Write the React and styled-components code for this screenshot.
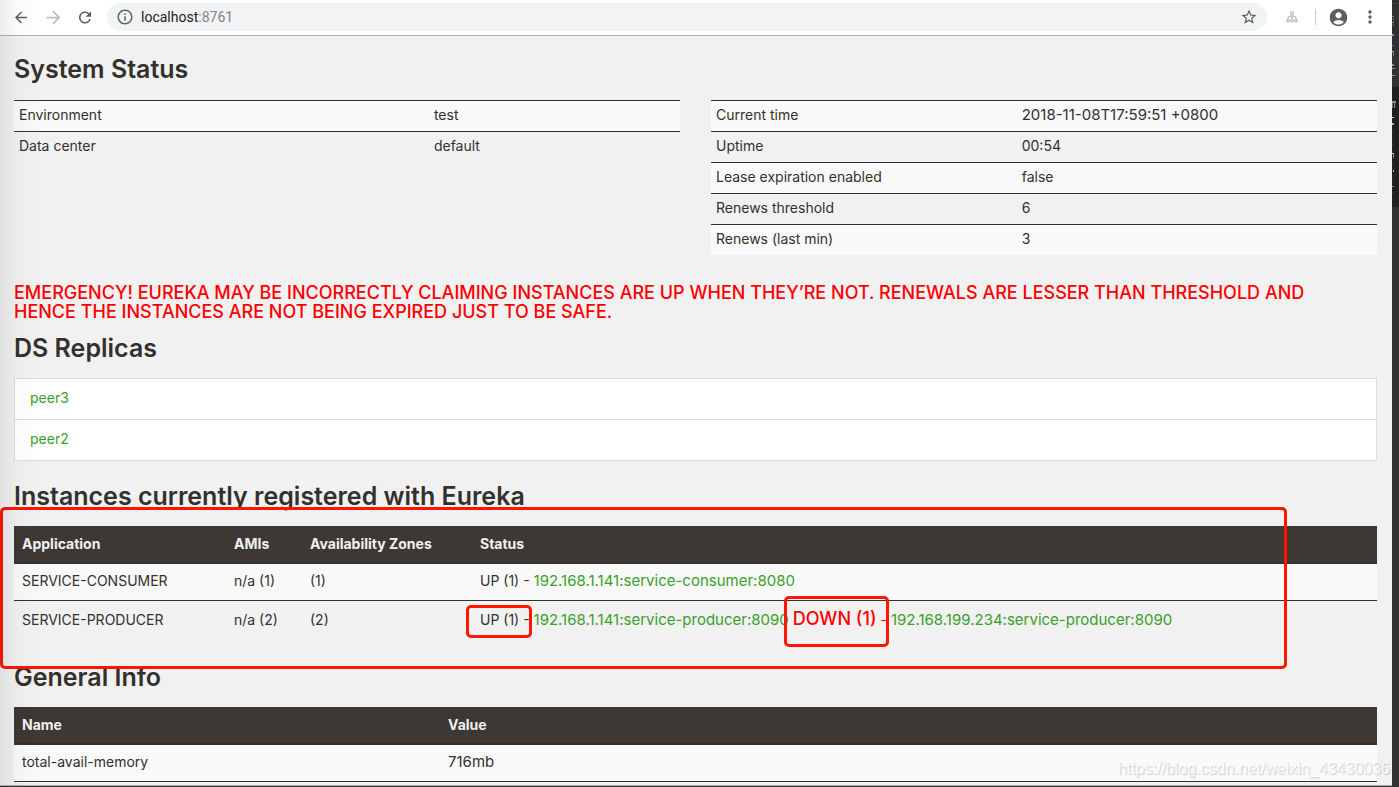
import React from "react";
import styled, { createGlobalStyle } from "styled-components";
import { MdArrowBack, MdArrowForward, MdRefresh, MdInfoOutline, MdStarBorder, MdAccountCircle, MdMoreVert } from "react-icons/md";

const GlobalStyle = createGlobalStyle`
  *, *::before, *::after { box-sizing: border-box; }
  body {
    margin: 0;
    background: #2f3133;
    color: #34302d;
    font-family: Inter, "Noto Sans", sans-serif;
    font-size: 14px;
    line-height: 20px;
  }
`;

const Desktop = styled.div`
  display: flex;
  align-items: flex-start;
`;

const BrowserWindow = styled.div`
  flex: 1;
  min-width: 0;
  background: #f1f1f1;
  border-bottom: 1px solid #a8a8a8;
  box-shadow: 0 1px 0 #fafafa;
  position: relative;
`;

const LeftShade = styled.div`
  position: absolute;
  inset: 0 auto 0 0;
  width: 44px;
  background: linear-gradient(90deg, rgba(0, 0, 0, 0.07), rgba(0, 0, 0, 0.02) 40%, rgba(0, 0, 0, 0));
  pointer-events: none;
`;

const Toolbar = styled.header`
  display: flex;
  align-items: flex-start;
  height: 36px;
  padding: 3px 6px 0 12px;
  background: #fff;
  border-bottom: 1px solid #b2b2b2;
`;

const IconButton = styled.button`
  display: flex;
  align-items: center;
  justify-content: center;
  width: ${(p) => p.$width || 32}px;
  height: 28px;
  padding: 0;
  border: 0;
  background: none;
  color: ${(p) => p.$color || "#5a5e63"};
  font-size: ${(p) => p.$size || 21}px;
`;

const AddressBar = styled.div`
  flex: 1;
  display: flex;
  align-items: center;
  height: 28px;
  margin: 0 9px 0 13px;
  padding: 0 2px 0 9px;
  border-radius: 14px;
  background: #f1f3f4;
  font: 14px/20px Roboto, sans-serif;
  color: #202124;
`;

const Address = styled.span`
  flex: 1;
  margin-left: 7px;
`;

const Port = styled.span`
  color: #80868b;
`;

const Divider = styled.span`
  width: 1px;
  height: 16px;
  margin: 6px 6px 0 7px;
  background: #c8cacc;
`;

const Page = styled.main`
  padding: 18px 15px 3px 14px;
`;

const Heading = styled.h1`
  margin: 0;
  font-size: 25px;
  font-weight: 600;
  line-height: 30px;
`;

const StatusGrid = styled.div`
  display: grid;
  grid-template-columns: 1fr 1fr;
  gap: 31px;
  align-items: start;
  margin: 16px 0 28px;
`;

const DataTable = styled.table`
  width: 100%;
  table-layout: fixed;
  border-spacing: 0;
  border-collapse: separate;
`;

const StatusRow = styled.tr`
  background: ${(p) => (p.$odd ? "#f9f9f9" : "transparent")};
  th, td {
    height: 31px;
    padding: 4px 5px 6px;
    border-top: 1px solid #34302d;
    font-weight: 400;
    text-align: left;
  }
`;

const Numeric = styled.span`
  font-size: 15px;
`;

const Warning = styled.p`
  margin: 0 0 12px;
  padding-right: 30px;
  color: #f00;
  font-size: 18px;
  font-weight: 500;
  line-height: 19px;
`;

const PeerList = styled.ul`
  list-style: none;
  margin: 15px 0 20px;
  padding: 0;
  border: 1px solid #ddd;
  background: #fff;
`;

const Peer = styled.li`
  height: ${(p) => (p.$last ? 40 : 41)}px;
  padding: 9px 15px;
  border-bottom: ${(p) => (p.$last ? 0 : 1)}px solid #ddd;
`;

const Link = styled.a`
  color: #39a02b;
  text-decoration: none;
`;

const InstanceLink = styled(Link)`
  font-size: 15px;
`;

const Section = styled.section`
  position: relative;
`;

const TableTitle = styled(Heading)`
  margin: ${(p) => p.$space || 0}px 0 15px;
`;

const HeadRow = styled.tr`
  th {
    height: 38px;
    padding: 7px 8px;
    border-bottom: 2px solid #34302d;
    background: #3e3834;
    color: #f1f1f1;
    font-weight: 700;
    text-align: left;
    white-space: nowrap;
  }
`;

const BodyRow = styled.tr`
  background: ${(p) => (p.$odd ? "#f9f9f9" : "transparent")};
  td {
    height: 37px;
    padding: ${(p) => (p.$last ? "8px" : "7px 8px 9px")};
    border-bottom: 1px solid ${(p) => (p.$last ? "transparent" : "#34302d")};
    white-space: nowrap;
  }
`;

const Down = styled.span`
  color: #f00;
`;

const DownLabel = styled.strong`
  font-size: 18px;
  font-weight: 500;
`;

const Mark = styled.div`
  position: absolute;
  left: ${(p) => p.$left}px;
  top: ${(p) => p.$top}px;
  width: ${(p) => p.$width}px;
  height: ${(p) => p.$height}px;
  border: 3px solid #ff1500;
  border-radius: 5px;
  pointer-events: none;
`;

const Watermark = styled.div`
  position: absolute;
  right: 2px;
  bottom: 6px;
  font: 16px/20px "Liberation Sans", sans-serif;
  color: rgba(255, 255, 255, 0.7);
  text-shadow: 1px 1px 1px rgba(0, 0, 0, 0.18);
`;

const Backdrop = styled.div`
  width: 7px;
  flex: none;
`;

const EdgeDrawing = styled.svg`
  display: block;
`;

function Cols({ widths }) {
  return (
    <colgroup>
      {widths.map((w, i) => <col key={i} width={w} />)}
    </colgroup>
  );
}

function StatusTable({ rows, first }) {
  return (
    <DataTable>
      <Cols widths={[first, "*"]} />
      <tbody>
        {rows.map(([name, value], i) => (
          <StatusRow key={name} $odd={i % 2 === 0}>
            <th scope="row">{name}</th>
            <td>{value}</td>
          </StatusRow>
        ))}
      </tbody>
    </DataTable>
  );
}

// Sliver of a dark code editor behind the browser window: x, y, width, height, colour.
const editorDabs = [
  [0, 16, 2, 1, "#777"], [1, 18, 1, 3, "#666"], [0, 22, 2, 1, "#888"], [1, 24, 1, 2, "#666"],
  [0, 34, 2, 2, "#a08c70"], [0, 45, 2, 1, "#80604a"], [0, 51, 2, 1, "#aaa"], [1, 52, 1, 4, "#5f7f9c"],
  [0, 64, 2, 2, "#8a8a8a"], [0, 68, 3, 1, "#a98c6c"], [0, 75, 3, 1, "#a98c6c"],
  [0, 101, 4, 2, "#8e8e8e"], [2, 103, 1, 5, "#8e8e8e"], [0, 103, 1, 5, "#777"],
  [0, 117, 2, 1, "#ccc"], [0, 123, 2, 2, "#c4b090"], [0, 132, 1, 1, "#7d3020"], [0, 138, 1, 1, "#7d3020"],
  [0, 144, 1, 1, "#7d3020"], [0, 153, 2, 1, "#ccc"], [1, 154, 1, 4, "#6c92b8"], [0, 164, 1, 1, "#7d3020"],
  [1, 170, 1, 2, "#b8b8d0"], [0, 178, 1, 1, "#7d3020"], [0, 186, 2, 1, "#b88860"], [0, 192, 1, 1, "#7d3020"],
];

function EditorEdge() {
  return (
    <EdgeDrawing width="7" height="210" viewBox="0 0 7 210" aria-hidden="true">
      <rect y="3" width="7" height="1" fill="#3c3e40" />
      <rect y="87" width="7" height="120" fill="#1f2121" />
      {editorDabs.map(([x, y, w, h, fill], i) => <rect key={i} x={x} y={y} width={w} height={h} fill={fill} />)}
    </EdgeDrawing>
  );
}

export default function App() {
  return (
    <>
      <GlobalStyle />
      <Desktop>
        <BrowserWindow>
          <Toolbar>
            <IconButton aria-label="Back" $width={18}><MdArrowBack /></IconButton>
            <IconButton aria-label="Forward" $width={46} $color="#bbbdbf"><MdArrowForward /></IconButton>
            <IconButton aria-label="Reload" $width={18}><MdRefresh /></IconButton>
            <AddressBar>
              <MdInfoOutline size={18} color="#5f6368" />
              <Address>localhost<Port>:8761</Port></Address>
              <IconButton aria-label="Bookmark" $size={18}><MdStarBorder /></IconButton>
            </AddressBar>
            <IconButton aria-label="Sitemap" $color="#c4c4c4">
              <svg width="12" height="12" viewBox="0 0 12 12" fill="none" stroke="currentColor" strokeWidth="1.5">
                <path d="M6 4v4.500M2 8.500V7.500Q2 5.500 4 5.500H8Q10 5.500 10 7.500V8.500" />
                <circle cx="6" cy="2.500" r="1.500" />
                <circle cx="2" cy="9.800" r="1.200" />
                <circle cx="6" cy="9.800" r="1.200" />
                <circle cx="10" cy="9.800" r="1.200" />
              </svg>
            </IconButton>
            <Divider />
            <IconButton aria-label="Profile"><MdAccountCircle /></IconButton>
            <IconButton aria-label="Menu" $size={20}><MdMoreVert /></IconButton>
          </Toolbar>
          <Page>
            <Heading>System Status</Heading>
            <StatusGrid>
              <StatusTable first="62.3%" rows={[["Environment", "test"], ["Data center", "default"]]} />
              <StatusTable
                first="45.9%"
                rows={[
                  ["Current time", <Numeric key="time">2018-11-08T17:59:51 +0800</Numeric>],
                  ["Uptime", "00:54"],
                  ["Lease expiration enabled", "false"],
                  ["Renews threshold", "6"],
                  ["Renews (last min)", "3"],
                ]}
              />
            </StatusGrid>
            <Warning>
              EMERGENCY! EUREKA MAY BE INCORRECTLY CLAIMING INSTANCES ARE UP WHEN THEY’RE NOT. RENEWALS ARE LESSER THAN THRESHOLD AND HENCE THE INSTANCES ARE NOT BEING EXPIRED JUST TO BE SAFE.
            </Warning>
            <Heading>DS Replicas</Heading>
            <PeerList>
              <Peer><Link href="#peer3">peer3</Link></Peer>
              <Peer $last><Link href="#peer2">peer2</Link></Peer>
            </PeerList>
            <Section>
              <TableTitle>Instances currently registered with Eureka</TableTitle>
              <DataTable>
                <Cols widths={["212", "76", "170", "*"]} />
                <thead>
                  <HeadRow><th>Application</th><th>AMIs</th><th>Availability Zones</th><th>Status</th></HeadRow>
                </thead>
                <tbody>
                  <BodyRow $odd>
                    <td>SERVICE-CONSUMER</td><td>n/a (1)</td><td>(1)</td>
                    <td>UP (1) - <InstanceLink href="#consumer">192.168.1.141:service-consumer:8080</InstanceLink></td>
                  </BodyRow>
                  <BodyRow $last>
                    <td>SERVICE-PRODUCER</td><td>n/a (2)</td><td>(2)</td>
                    <td>UP (1) - <InstanceLink href="#producer">192.168.1.141:service-producer:8090</InstanceLink> <Down><DownLabel>DOWN (1)</DownLabel> -</Down> <InstanceLink href="#producer2">192.168.199.234:service-producer:8090</InstanceLink></td>
                  </BodyRow>
                </tbody>
              </DataTable>
              <Mark $left={-14} $top={26} $width={1287} $height={162} />
              <Mark $left={452} $top={124} $width={66} $height={33} />
              <Mark $left={770} $top={115} $width={105} $height={51} />
            </Section>
            <TableTitle $space={23}>General Info</TableTitle>
            <DataTable>
              <Cols widths={["426", "*"]} />
              <thead>
                <HeadRow><th>Name</th><th>Value</th></HeadRow>
              </thead>
              <tbody>
                <BodyRow $odd><td>total-avail-memory</td><td><Numeric>716mb</Numeric></td></BodyRow>
              </tbody>
            </DataTable>
          </Page>
          <LeftShade />
          <Watermark>https://blog.csdn.net/weixin_43430036</Watermark>
        </BrowserWindow>
        <Backdrop><EditorEdge /></Backdrop>
      </Desktop>
    </>
  );
}
